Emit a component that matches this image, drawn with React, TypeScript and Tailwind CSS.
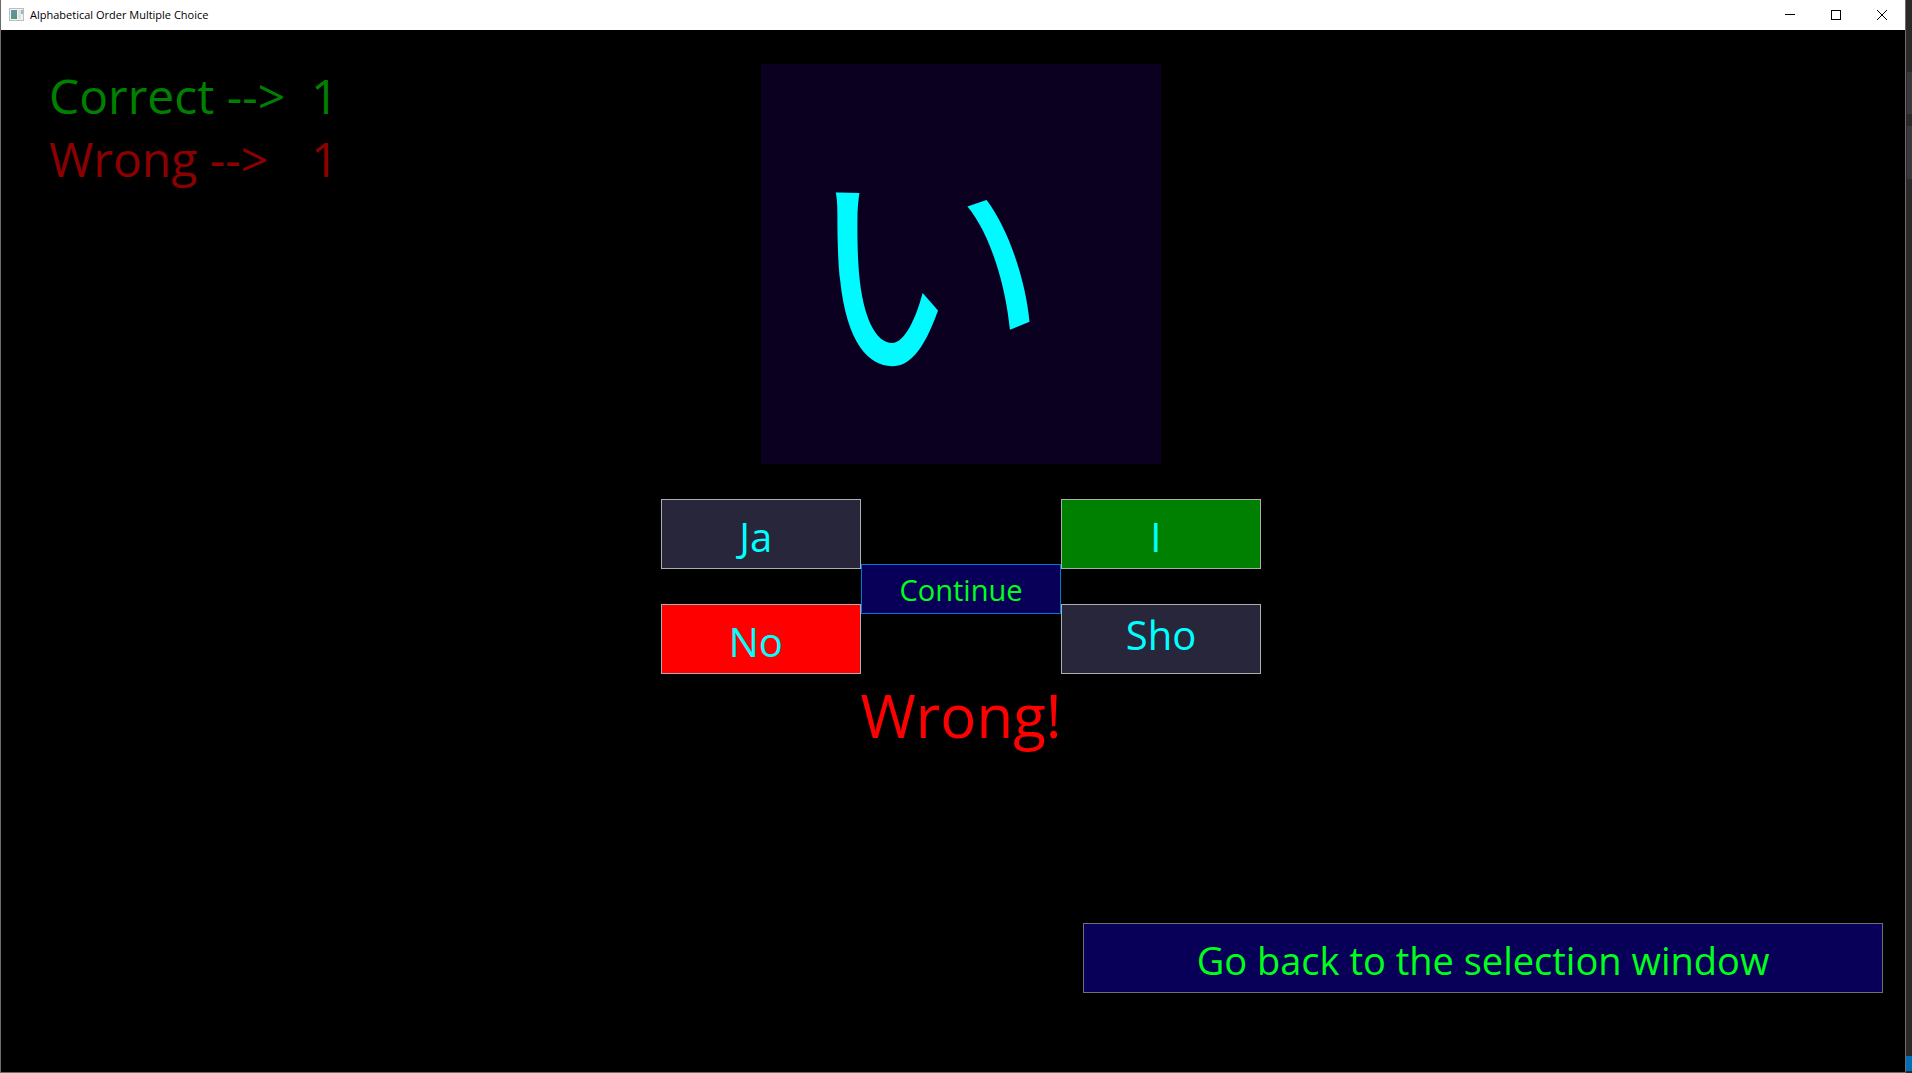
import React from "react";

const answerBase =
  "flex h-[70px] items-center justify-center border border-[#adadad] text-[40px] whitespace-pre text-[#00ffff]";

function AppIcon() {
  return (
    <svg className="h-4 w-4" viewBox="0 0 16 16" aria-hidden="true" shapeRendering="crispEdges">
      <rect x="0" y="1" width="15" height="13" fill="#b9bdc4" />
      <rect x="1" y="2" width="13" height="11" fill="#f2f3f5" />
      <defs>
        <linearGradient id="pane" x1="0" y1="0" x2="0.6" y2="1">
          <stop offset="0" stopColor="#6d8fb8" />
          <stop offset="1" stopColor="#4f9a72" />
        </linearGradient>
      </defs>
      <rect x="2" y="3" width="6" height="9" fill="url(#pane)" />
      <rect x="9" y="3" width="3" height="9" fill="#dfe3e6" />
      <rect x="12" y="3" width="2" height="4" fill="#9db9b4" />
    </svg>
  );
}

function TitleBar() {
  return (
    <header className="flex h-[30px] shrink-0 items-center bg-white pl-2 text-black">
      <AppIcon />
      <h1 className="ml-[5px] flex-1 text-[11px] leading-4">Alphabetical Order Multiple Choice</h1>
      <button type="button" aria-label="Minimize" className="flex h-full w-[46px] items-center justify-center">
        <svg className="h-[10px] w-[10px]" viewBox="0 0 10 10" shapeRendering="crispEdges">
          <rect y="4" width="10" height="1" />
        </svg>
      </button>
      <button type="button" aria-label="Maximize" className="flex h-full w-[46px] items-center justify-center">
        <svg className="h-[10px] w-[10px]" viewBox="0 0 10 10" fill="none" stroke="#000">
          <rect x="0.5" y="0.5" width="9" height="9" />
        </svg>
      </button>
      <button type="button" aria-label="Close" className="flex h-full w-[46px] items-center justify-center">
        <svg className="h-[10px] w-[10px]" viewBox="0 0 10 10" stroke="#000">
          <path d="M0 0L10 10M10 0L0 10" />
        </svg>
      </button>
    </header>
  );
}

function Scores() {
  return (
    <dl className="grid grid-cols-[262px_auto] content-start justify-start pl-8 text-[48px] leading-[63px]">
      <dt className="text-[#008000]">Correct --&gt;</dt>
      <dd className="text-[#008000]">1</dd>
      <dt className="text-[#8b0000]">Wrong --&gt;</dt>
      <dd className="text-[#8b0000]">1</dd>
    </dl>
  );
}

export default function App() {
  return (
    <div className="flex min-h-screen bg-[#2b2a2a] font-['Open_Sans',sans-serif]">
      <div className="flex flex-1 flex-col border-x border-b border-[#6b6b6b] bg-black">
        <TitleBar />
        <main className="flex flex-1 flex-col pt-[34px] pl-4">
          <section className="grid grid-cols-[1fr_400px_1fr]">
            <Scores />
            <div
              lang="ja"
              className="flex h-[400px] items-center justify-center bg-[#0c0020] pr-[68px] pb-3 font-['Noto_Sans_CJK_JP',sans-serif] text-[244px] leading-none font-normal text-[#00faff]"
            >
              い
            </div>
          </section>
          <section className="mt-[35px] grid grid-cols-[200px_200px_200px] grid-rows-2 justify-center gap-y-[35px]">
            <button type="button" className={`${answerBase} bg-[#28263a] pt-[5px]`}>{"Ja "}</button>
            <button
              type="button"
              className="row-span-2 mt-[65px] h-[50px] border border-[#0078d7] bg-[#080058] text-[29px] leading-none text-[#00ff1a]"
            >
              Continue
            </button>
            <button type="button" className={`${answerBase} bg-[#008000] pt-[5px]`}>{"I "}</button>
            <button type="button" className={`${answerBase} bg-[#ff0000] pt-[5px]`}>{"No "}</button>
            <button type="button" className={`${answerBase} bg-[#28263a] pb-2`}>Sho</button>
          </section>
          <p role="status" className="text-center text-[60px] leading-[82px] text-[#ff0000]">
            Wrong!
          </p>
          <button
            type="button"
            className="mt-auto mr-[22px] mb-[79px] flex h-[70px] w-[800px] items-center justify-center self-end border border-[#707070] bg-[#080058] pt-[5px] text-[38px] text-[#00ff1a]"
          >
            Go back to the selection window
          </button>
        </main>
      </div>
      <div className="flex w-[6px] flex-col pt-[72px] pl-px" aria-hidden="true">
        <div className="h-[42px] bg-[#3a383c]" />
        <div className="mt-3 h-[53px] bg-[#3a383c]" />
        <div className="mt-auto mb-[2px] -ml-px h-[15px] bg-[#006fb9]" />
      </div>
    </div>
  );
}
